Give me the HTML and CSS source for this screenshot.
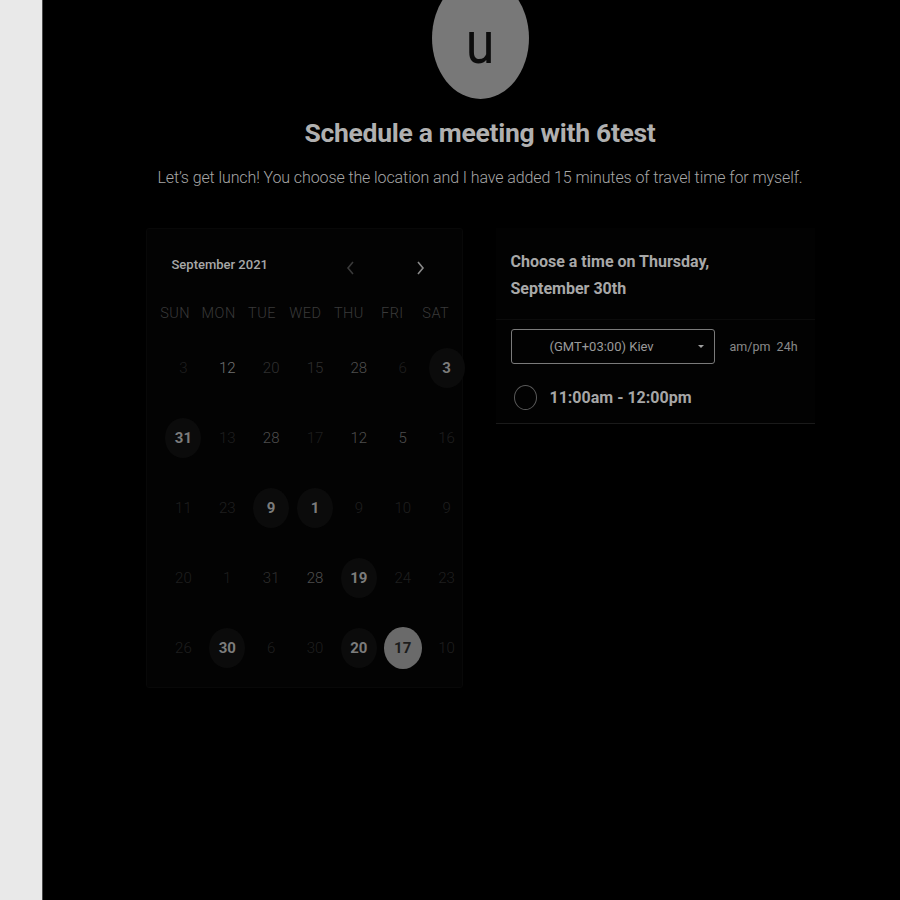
FILE: index.html
```html
<!DOCTYPE html>
<html>
<head>
<meta charset="utf-8">
<link rel="stylesheet" href="styles.css">
</head>
<body>
<div class="app">
  <aside class="sidebar"></aside>
  <main class="main">
    <div class="avatar"><span>u</span></div>
    <h1 class="title">Schedule a meeting with 6test</h1>
    <p class="subtitle">Let’s get lunch! You choose the location and I have added 15 minutes of travel time for myself.</p>
    <div class="cards">
      <section class="calendar">
        <div class="cal-head">
          <span class="month">September 2021</span>
          <span class="nav prev"><svg width="10" height="16" viewBox="0 0 10 16"><path d="M8 2 L3 8 L8 14" fill="none" stroke="currentColor" stroke-width="1.6"/></svg></span>
          <span class="nav next"><svg width="10" height="16" viewBox="0 0 10 16"><path d="M2 2 L7 8 L2 14" fill="none" stroke="currentColor" stroke-width="1.6"/></svg></span>
        </div>
        <div class="weekdays">
          <span>SUN</span><span>MON</span><span>TUE</span><span>WED</span><span>THU</span><span>FRI</span><span>SAT</span>
        </div>
        <div class="days">
          <span class="day v1">3</span>
          <span class="day v4">12</span>
          <span class="day v2">20</span>
          <span class="day v2">15</span>
          <span class="day v3">28</span>
          <span class="day v1">6</span>
          <span class="day avail"><b>3</b></span>

          <span class="day avail"><b>31</b></span>
          <span class="day v1">13</span>
          <span class="day v3">28</span>
          <span class="day v1">17</span>
          <span class="day v3">12</span>
          <span class="day v3">5</span>
          <span class="day v1">16</span>

          <span class="day v1">11</span>
          <span class="day v1">23</span>
          <span class="day avail"><b>9</b></span>
          <span class="day avail"><b>1</b></span>
          <span class="day v1">9</span>
          <span class="day v1">10</span>
          <span class="day v1">9</span>

          <span class="day v1">20</span>
          <span class="day v1">1</span>
          <span class="day v2">31</span>
          <span class="day v3">28</span>
          <span class="day avail"><b>19</b></span>
          <span class="day v1">24</span>
          <span class="day v1">23</span>

          <span class="day v1">26</span>
          <span class="day avail"><b>30</b></span>
          <span class="day v1">6</span>
          <span class="day v1">30</span>
          <span class="day avail"><b>20</b></span>
          <span class="day selected"><b>17</b></span>
          <span class="day v1">10</span>
        </div>
      </section>
      <section class="times">
        <h2 class="times-title">Choose a time on Thursday,<br>September 30th</h2>
        <div class="times-panel">
          <div class="tz-row">
            <div class="tz-select">
              <span class="tz-label">(GMT+03:00) Kiev</span>
              <span class="caret"></span>
            </div>
            <span class="fmt">am/pm&nbsp;&nbsp;24h</span>
          </div>
          <div class="slot">
            <span class="radio"></span>
            <span class="slot-label">11:00am - 12:00pm</span>
          </div>
        </div>
      </section>
    </div>
  </main>
</div>
</body>
</html>
```
FILE: styles.css
```css
html, body {
  margin: 0;
  padding: 0;
  height: 100%;
  overflow: hidden;
  background: #000;
  font-family: Roboto, "Liberation Sans", sans-serif;
}
.app {
  display: flex;
  height: 900px;
}
.sidebar {
  width: 42px;
  flex: none;
  background: #e9e9e9;
  border-right: 1px solid #4a4a4a;
}
.main {
  flex: 1;
  background: #000;
  display: flex;
  flex-direction: column;
  align-items: center;
  padding-left: 17px;
}
.avatar {
  width: 97px;
  height: 122px;
  margin-top: -23px;
  border-radius: 50%;
  background: #787878;
  display: flex;
  align-items: center;
  justify-content: center;
  flex: none;
}
.avatar span {
  font-size: 52px;
  color: #0c0c0c;
  line-height: 1;
  transform: scaleY(1.15);
  margin-top: 10px;
}
.title {
  margin: 18px 0 0;
  font-size: 26.5px;
  font-weight: 700;
  color: #b0b0b0;
  letter-spacing: -0.3px;
  line-height: 32px;
}
.subtitle {
  margin: 19px 0 0;
  font-size: 16px;
  font-weight: 300;
  color: #a6a6a6;
  line-height: 20px;
  letter-spacing: -0.1px;
}
.cards {
  display: flex;
  gap: 33px;
  margin-top: 40px;
  align-items: flex-start;
}
.calendar {
  width: 317px;
  height: 460px;
  box-sizing: border-box;
  background: #030303;
  border: 1px solid #080808;
  border-radius: 3px;
  padding: 0 6px;
}
.cal-head {
  display: flex;
  align-items: center;
  height: 66px;
  padding-top: 4px;
  box-sizing: border-box;
  padding-left: 19px;
}
.month {
  font-size: 13px;
  font-weight: 500;
  color: #a8a8a8;
  width: 172px;
}
.nav {
  width: 12px;
  display: flex;
  justify-content: center;
  margin-top: 8px;
}
.prev { color: #3a3a3a; }
.next { color: #8a8a8a; margin-left: 59px; }
.weekdays {
  display: grid;
  grid-template-columns: repeat(7, 1fr);
  font-size: 14.5px;
  font-weight: 300;
  color: #3a3a3a;
  letter-spacing: 0.5px;
  text-align: center;
  height: 38px;
  line-height: 38px;
  margin-left: 1px;
  margin-right: -2px;
}
.days {
  display: grid;
  grid-template-columns: repeat(7, 1fr);
  grid-auto-rows: 70px;
  margin-top: 0;
  margin-left: 9px;
  margin-right: -13px;
}
.day {
  display: flex;
  align-items: center;
  justify-content: center;
  font-size: 15px;
  font-weight: 300;
}
.v1 { color: #1f1f1f; }
.v2 { color: #2f2f2f; }
.v3 { color: #4e4e4e; }
.v4 { color: #727272; }
.day b {
  width: 36px;
  height: 40px;
  border-radius: 50%;
  display: flex;
  align-items: center;
  justify-content: center;
  font-weight: 700;
  font-size: 15px;
}
.avail b {
  background: #0b0b0b;
  color: #7c7c7c;
}
.selected b {
  width: 38px;
  height: 42px;
  background: #6a6a6a;
  color: #1c1c1c;
}
.times {
  width: 319px;
  box-sizing: border-box;
  background: #020202;
  border-bottom: 1px solid #1a1a1a;
}
.times-title {
  margin: 0;
  padding: 20px 15px 0;
  font-size: 16px;
  font-weight: 700;
  color: #a8a8a8;
  line-height: 27px;
  height: 91px;
  box-sizing: border-box;
}
.times-panel {
  border-top: 1px solid #0b0b0b;
  padding: 9px 15px 0;
  height: 104px;
  box-sizing: border-box;
}
.tz-row {
  display: flex;
  align-items: center;
}
.tz-select {
  width: 204px;
  height: 35px;
  box-sizing: border-box;
  border: 1px solid #7a7a7a;
  border-radius: 3px;
  display: flex;
  align-items: center;
  position: relative;
}
.tz-label {
  font-size: 13px;
  color: #9a9a9a;
  margin-left: 38px;
}
.caret {
  position: absolute;
  right: 10px;
  top: 15px;
  border-left: 3px solid transparent;
  border-right: 3px solid transparent;
  border-top: 3px solid #a0a0a0;
}
.fmt {
  margin-left: 15px;
  font-size: 12.5px;
  color: #8a8a8a;
}
.slot {
  display: flex;
  align-items: center;
  margin-top: 21px;
  padding-left: 3px;
}
.radio {
  width: 21px;
  height: 23px;
  border: 1px solid #5a5a5a;
  border-radius: 50%;
}
.slot-label {
  margin-left: 13px;
  font-size: 16px;
  font-weight: 700;
  color: #a6a6a6;
}
```
